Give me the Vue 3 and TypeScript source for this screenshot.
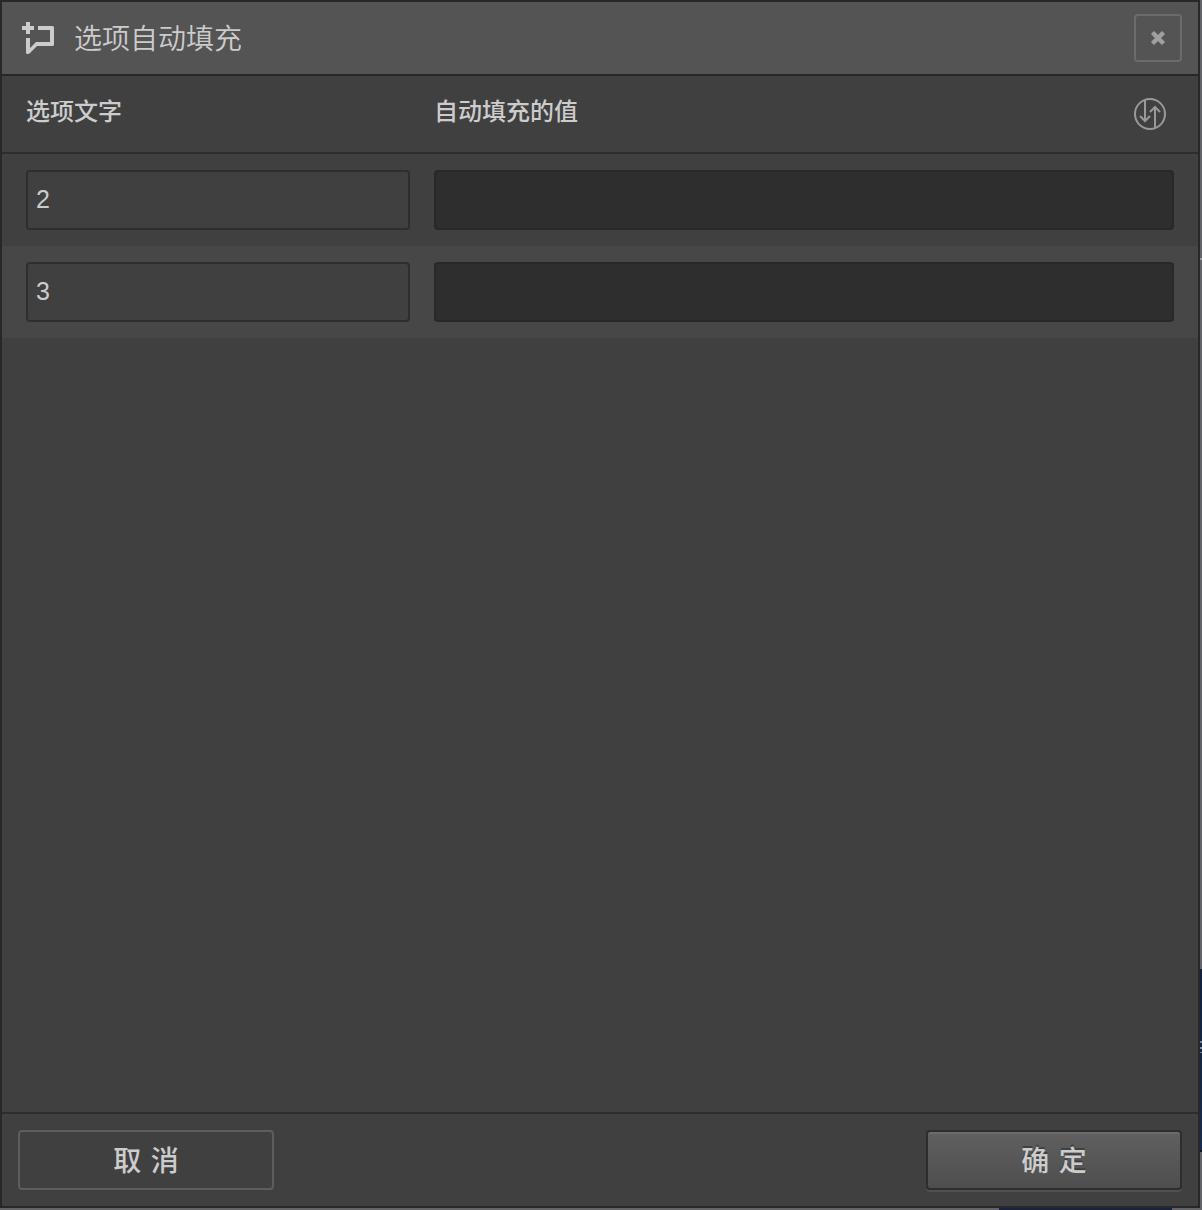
<script setup lang="ts">
import { ref } from 'vue'

interface OptionRow {
  text: string
  value: string
}

const rows = ref<OptionRow[]>([
  { text: '2', value: '' },
  { text: '3', value: '' },
])
</script>

<template>
  <div class="page">
    <section class="dialog">
      <header class="titlebar">
        <svg class="logo" width="32" height="32" viewBox="0 0 32 32">
          <path d="M4 0h4v4h4v4H8v4H4V8H0V4h4z" />
          <path d="M16 4h14.5a1.5 1.5 0 0 1 1.5 1.5v17a1.5 1.5 0 0 1-1.5 1.5H15l-7.200 7.200Q7 32 6.200 32H5.500A1.500 1.500 0 0 1 4 30.500V16h4v10l6-6h14V8H16z" />
        </svg>
        <h1>选项自动填充</h1>
        <button class="close" aria-label="关闭">
          <svg width="16" height="16" viewBox="0 0 16 16">
            <path d="M2.500 2.500l11 11M13.500 2.500l-11 11" />
          </svg>
        </button>
      </header>
      <div class="columns">
        <span class="col-text">选项文字</span>
        <span class="col-value">自动填充的值</span>
        <svg class="swap" width="32" height="32" viewBox="0 0 32 32">
          <circle cx="16" cy="16" r="15" />
          <path d="M11 2v21M6 18l5 5 5-5M21 30V9M16 14l5-5 5 5" />
        </svg>
      </div>
      <main class="list">
        <div v-for="row in rows" :key="row.text" class="row">
          <div class="field label">{{ row.text }}</div>
          <input v-model="row.value" class="field value" />
        </div>
      </main>
      <footer class="footer">
        <button class="btn cancel">取 消</button>
        <button class="btn ok">确 定</button>
      </footer>
    </section>
  </div>
</template>

<style>
body {
  background: #626469;
}
</style>

<style scoped>
* {
  box-sizing: border-box;
}
.page {
  width: 1202px;
  height: 1210px;
  padding: 0 2px 2px 0;
  overflow: hidden;
  background:
    linear-gradient(#9a9ca0, #9a9ca0) 1200px 258px / 2px 2px no-repeat,
    linear-gradient(#77808f, #77808f) 1200px 1041px / 2px 2px no-repeat,
    linear-gradient(#8a909c, #8a909c) 1200px 1047px / 2px 2px no-repeat,
    linear-gradient(#77808f, #77808f) 1200px 1052px / 2px 1px no-repeat,
    linear-gradient(#10151f, #10151f) 1200px 1150px / 2px 2px no-repeat,
    linear-gradient(#12203c, #1a2a4e) 1200px 969px / 2px 181px no-repeat,
    linear-gradient(#18233f, #18233f) 999px 1208px / 173px 2px no-repeat,
    #626469;
  font-family: "Liberation Sans", "Noto Sans CJK SC", sans-serif;
  color: #ccc;
}
.dialog {
  display: flex;
  flex-direction: column;
  height: 1208px;
  border: 2px solid #282828;
  background: #404040;
}
.titlebar {
  display: flex;
  align-items: center;
  height: 74px;
  padding: 0 16px 0 20px;
  border-bottom: 2px solid #282828;
  background: #545454;
}
.logo {
  fill: #ccc;
}
h1 {
  margin: 0 auto 2px 20px;
  font-family: "Noto Sans CJK SC", sans-serif;
  font-size: 28px;
  font-weight: 350;
  line-height: 70px;
}
.close {
  display: flex;
  align-items: center;
  justify-content: center;
  width: 48px;
  height: 48px;
  padding: 0;
  border: 2px solid #6b6b6b;
  border-radius: 4px;
  background: none;
}
.close svg {
  stroke: #a0a0a0;
  stroke-width: 4.4;
}
.columns {
  display: flex;
  align-items: center;
  height: 78px;
  padding: 0 32px 0 24px;
  border-bottom: 2px solid #2e2e2e;
  font-family: "Noto Sans CJK SC", sans-serif;
  font-size: 24px;
  font-weight: 500;
}
.columns span {
  line-height: 36px;
  margin-bottom: 8px;
}
.col-text {
  width: 408px;
}
.col-value {
  flex: 1;
}
.swap {
  fill: none;
  stroke: #999;
  stroke-width: 2;
}
.list {
  flex: 1;
}
.row {
  display: flex;
  gap: 24px;
  height: 92px;
  padding: 16px 24px;
}
.row:nth-child(even) {
  background: #474747;
}
.field {
  height: 60px;
  padding: 0 8px;
  border: 2px solid #2e2e2e;
  border-radius: 4px;
  font-size: 25px;
  line-height: 55px;
}
.label {
  width: 384px;
  background: #404040;
}
.value {
  width: 740px;
  border-color: #282828;
  background: #2e2e2e;
  color: #ccc;
  outline: none;
}
.footer {
  display: flex;
  justify-content: space-between;
  height: 94px;
  padding: 16px;
  border-top: 2px solid #2e2e2e;
}
.btn {
  width: 256px;
  height: 60px;
  padding: 0 0 2px;
  border: 2px solid #5e5e5e;
  border-radius: 4px;
  background: none;
  color: #ccc;
  font-family: "Noto Sans CJK SC", sans-serif;
  font-size: 28px;
  font-weight: 500;
  line-height: 54px;
  word-spacing: 3px;
}
.ok {
  border-color: #2e2e2e;
  background: linear-gradient(#606060, #4e4e4e);
  box-shadow: inset 0 2px #6b6b6b, 0 2px #505050;
  text-shadow: 0 -2px #404040;
}
</style>
